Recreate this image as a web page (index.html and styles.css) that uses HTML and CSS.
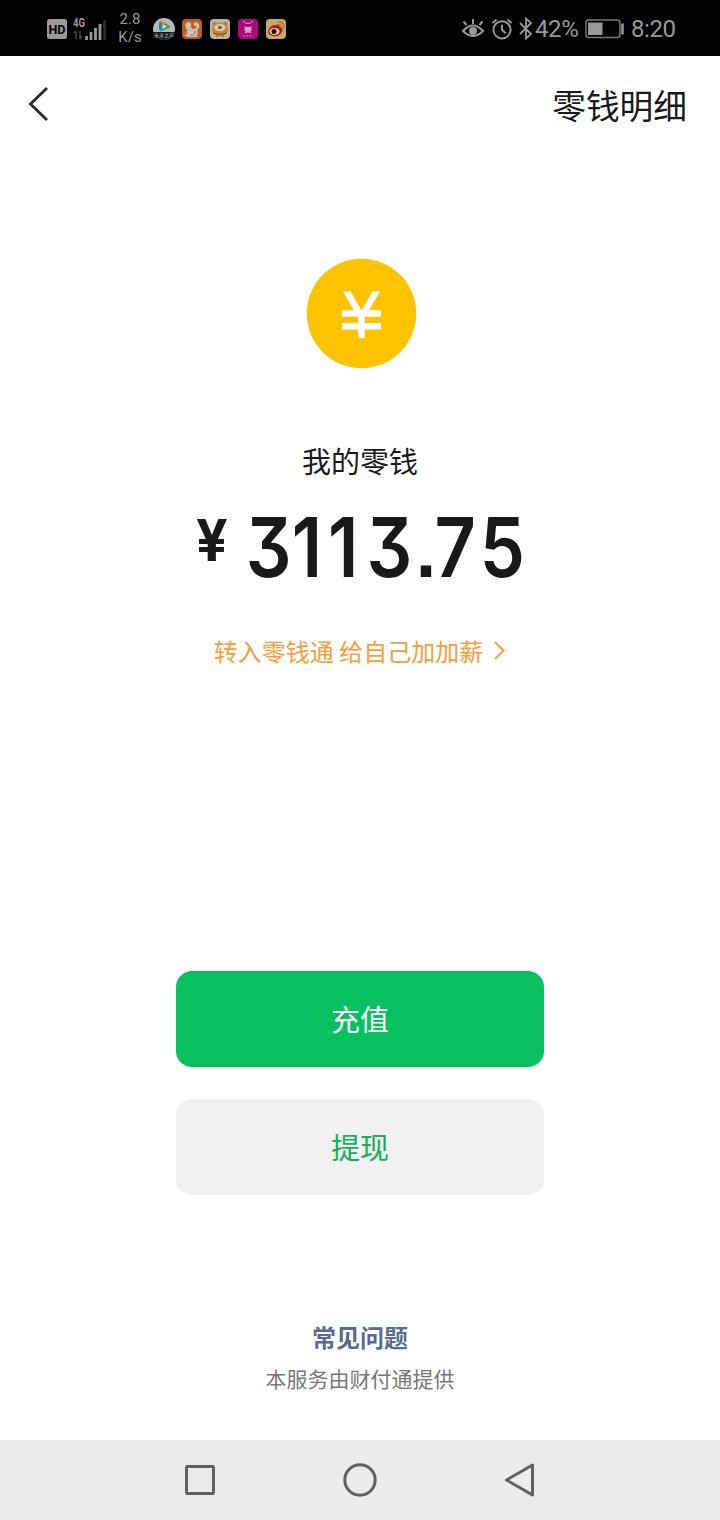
FILE: index.html
```html
<!DOCTYPE html>
<html lang="zh-CN">
<head>
<meta charset="utf-8">
<title>零钱</title>
<link rel="stylesheet" href="styles.css">
</head>
<body>
<div class="screen">
  <header class="status">
    <svg class="hd" width="20" height="20" viewBox="0 0 20 20"><rect width="20" height="20" rx="2.500" fill="#999"/><text x="10" y="15" text-anchor="middle" textLength="17" lengthAdjust="spacingAndGlyphs" class="hd-text">HD</text></svg>
    <svg class="signal" width="34" height="26" viewBox="0 0 34 26">
      <text x="0" y="10.500" textLength="12" lengthAdjust="spacingAndGlyphs" class="net">4G</text>
      <path d="M3 15v8M1 17l2-2M7 15v8M7 23l2-3" stroke="#444" stroke-width="1.500" fill="none"/>
      <path d="M13.500 24v-4M18 24v-8M22.500 24v-12M27 24v-16" stroke="#999" stroke-width="2.800"/>
      <path d="M31.500 24v-20" stroke="#303030" stroke-width="2.400"/>
    </svg>
    <div class="speed"><span>2.8</span><span>K/s</span></div>
    <div class="apps">
      <svg width="22" height="22" viewBox="0 0 22 22"><circle cx="11" cy="11" r="11" fill="#b5b9bb"/><path d="M6.500 3Q5 8 6.500 13L10 11V5z" fill="#2687a9"/><path d="M8 3l9 5q1 1-1 2L6.500 14l4-4z" fill="#43a047"/><path d="M6.500 3q1-1 3 0l4 2.500-4 1z" fill="#d9942d"/><path d="M9.500 6l4.500 2.500-4.500 2.500z" fill="#ddd"/><path d="M0 14h22q-4 8-11 8T0 14" fill="#101820"/><text x="11" y="18.500" text-anchor="middle" class="tiny">未来之声</text></svg>
      <svg width="22" height="22" viewBox="0 0 22 22"><rect x="1" y="1" width="20" height="20" rx="4" fill="#bd5b20"/><path d="M4 8q0-3 3-4 4 0 3 4 0 3 3 3 4-1 2-3-3 0-2-3 3-2 5 1 1 4-2 6 2 4-1 6l3 1H8q-3 0-5-2 3 0 4-3l-3 1 3-3q-3-1-2-3z" fill="#c9c2bc"/><path d="M9 17q5 1 5-4" stroke="#bd5b20" fill="none"/></svg>
      <svg width="22" height="22" viewBox="0 0 22 22"><rect x="1" y="1" width="20" height="20" rx="4" fill="#b9b3aa"/><circle cx="5.500" cy="6" r="2" fill="#b87820"/><circle cx="16.500" cy="6" r="2" fill="#b87820"/><ellipse cx="11" cy="11.500" rx="8" ry="7" fill="#c98925"/><ellipse cx="11" cy="9.500" rx="5.500" ry="3.800" fill="#d2c8b3"/><path d="M9.500 7.500l4 2-4 2z" fill="#684028"/><path d="M4 15q7 3 14 0M7 18h2m4 0h2" stroke="#77501d" fill="none"/></svg>
      <svg width="22" height="22" viewBox="0 0 22 22"><rect x="1" y="1" width="20" height="20" rx="4" fill="#ae087e"/><path d="M6 3q5 5 10 0" stroke="#d0a7c4" fill="none"/><path d="M7 8l2 1h4l2-1-1 3 1 1-2 2 2 1h-3l-1-1-1 1H7l2-1-2-2 1-1z" fill="#d0a7c4"/><path d="M6 18h10" stroke="#c58bb4" stroke-dasharray="2 1"/></svg>
      <svg width="22" height="22" viewBox="0 0 22 22"><rect x="1" y="1" width="20" height="20" rx="4" fill="#c4aa65"/><path d="M3 13q3-7 8-6 3-1 4 2 4 1 2 5-3 5-9 4-5-1-5-5" fill="#ae1e20"/><ellipse cx="9.500" cy="13.500" rx="5" ry="3.500" fill="#ddd2bd"/><circle cx="9" cy="13.500" r="2.500" fill="#17120f"/><path d="M13 7q3-1 3 3M13 4q6-1 6 6" stroke="#b97524" stroke-width="1.500" fill="none"/></svg>
    </div>
    <div class="right">
      <svg width="24" height="24" viewBox="0 0 24 24" fill="none" stroke="#999" stroke-width="2"><path d="M2 14Q12 3 22 14 12 24 2 14z"/><circle cx="12" cy="14" r="4" fill="#999" stroke="none"/><path d="M12 7V2M5.500 8L2.500 4.500M18.500 8l3-3.500"/></svg>
      <svg class="alarm" width="22" height="24" viewBox="0 0 22 24" fill="none" stroke="#999" stroke-width="2"><circle cx="11" cy="12.800" r="8.600"/><path d="M11 7.800v5l3.500 3.500M1.500 6l4-3.500M20.500 6l-4-3.500"/></svg>
      <svg class="bt" width="14" height="24" viewBox="0 0 14 24" fill="none" stroke="#999" stroke-width="1.800"><path d="M1 6l11 11-5 4.500V1.500L12 6 1 17"/></svg>
      <span class="percent">42%</span>
      <svg class="battery" width="40" height="20" viewBox="0 0 40 20"><rect x=".9" y="1" width="34" height="17.500" rx="2.500" fill="none" stroke="#777" stroke-width="1.500"/><rect x="3" y="3.500" width="14.500" height="12.500" fill="#999"/><path d="M37.500 4.500v11" stroke="#999" stroke-width="2.500"/></svg>
      <span class="clock">8:20</span>
    </div>
  </header>

  <nav class="topbar">
    <svg width="22" height="36" viewBox="0 0 22 36" fill="none" stroke="#2a2a2a" stroke-width="2.800"><path d="M19 2L2.500 18 19 34"/></svg>
    <span class="detail">零钱明细</span>
  </nav>

  <main class="wallet">
    <svg class="coin" width="110" height="110" viewBox="0 0 110 110">
      <clipPath id="arms"><rect x="30" y="32.500" width="50" height="50"/></clipPath>
      <circle cx="54.500" cy="54.500" r="54.700" fill="#ffc300"/>
      <path clip-path="url(#arms)" d="M35.500 25L54.500 58 73.500 25M35 54.500h39M35 67.300h39M54.500 54v25.300" fill="none" stroke="#fff" stroke-width="6.500"/>
    </svg>
    <h1 class="label">我的零钱</h1>
    <svg class="amount" width="340" height="80" viewBox="0 0 340 80">
      <text class="yen" transform="translate(6 53.500) scale(.96 1)">¥</text>
      <text class="digits" transform="translate(0 70) scale(.87 1)" x="64 117 158.500 203 258 281 333" y="0">3113.75</text>
    </svg>
    <a class="promo"><span>转入零钱通 给自己加加薪</span><svg width="12" height="20" viewBox="0 0 12 20" fill="none" stroke="#fa9d3b" stroke-width="2"><path d="M1 1L9.500 9.500 1 18"/></svg></a>
    <div class="actions">
      <button class="btn primary">充值</button>
      <button class="btn secondary">提现</button>
    </div>
    <footer class="foot">
      <a class="faq">常见问题</a>
      <p class="provider">本服务由财付通提供</p>
    </footer>
  </main>

  <div class="navbar">
    <svg width="36" height="36" viewBox="0 0 36 36"><rect x="4.500" y="4.500" width="27" height="27" rx="1"/></svg>
    <svg width="36" height="36" viewBox="0 0 36 36"><circle cx="18" cy="18" r="15.200"/></svg>
    <svg width="36" height="36" viewBox="0 0 36 36"><path d="M4.500 18L30.500 3v30z" stroke-linejoin="round"/></svg>
  </div>
</div>
</body>
</html>
```
FILE: styles.css
```css
* { box-sizing: border-box; }
body { margin: 0; background: #fff; font-family: "Noto Sans CJK SC", sans-serif; color: #191919; }
svg { display: block; flex: none; }
.screen { width: 720px; height: 1520px; display: flex; flex-direction: column; overflow: hidden; }

.status { height: 56px; flex: none; background: #000; color: #999; display: flex; align-items: center; padding: 2px 0 0 47px; font-family: Roboto, sans-serif; }
.hd-text { font: 700 13.5px Roboto, sans-serif; fill: #000; }
.signal { margin-left: 6px; }
.net { font: 700 12px Roboto, sans-serif; fill: #999; }
.speed { width: 32px; margin-left: 7px; display: flex; flex-direction: column; text-align: center; font-size: 15px; line-height: 18px; margin-top: -2px; }
.apps { display: flex; gap: 6px; margin-left: 7px; }
.tiny { font: 5px "Noto Sans CJK SC", sans-serif; fill: #bbb; }
.right { margin-left: auto; width: 259px; display: flex; align-items: center; }
.alarm { margin-left: 6px; }
.bt { margin-left: 6px; }
.percent { width: 48px; margin-left: 2px; font-size: 24px; letter-spacing: -.4px; }
.battery { margin-left: 2px; }
.clock { margin-left: 6px; font-size: 24px; letter-spacing: -.4px; }

.topbar { height: 96px; flex: none; display: flex; justify-content: space-between; align-items: center; padding: 0 33px 0 28px; font-size: 33.7px; line-height: 50px; }
.detail { padding-top: 2px; }

.wallet { flex: 1; display: flex; flex-direction: column; align-items: center; }
.coin { margin: 107px 0 0 3px; overflow: visible; }
.label { margin: 70px 0 0; font-size: 29px; line-height: 42px; font-weight: 400; }
.amount { margin-top: 26px; fill: #191919; overflow: visible; }
.yen { font: 700 58px Inter, sans-serif; }
.digits { font: 600 82.5px Inter, sans-serif; font-feature-settings: "cv09" 1, "ss07" 1; }
.promo { margin-top: 46px; display: flex; align-items: center; gap: 11px; font-size: 24px; line-height: 36px; color: #fa9d3b; }
.actions { margin-top: 302px; display: flex; flex-direction: column; gap: 32px; }
.btn { width: 368px; height: 96px; padding: 0 0 2px; border: 0; border-radius: 16px; font: 29px/42px "Noto Sans CJK SC", sans-serif; }
.primary { background: #07c160; color: #fff; }
.secondary { background: #f1f1f1; color: #14ae5c; }
.foot { margin-top: 124px; text-align: center; }
.faq { display: block; font-size: 24px; line-height: 36px; font-weight: 700; color: #576b95; }
.provider { margin: 8px 0 0; font-size: 21px; line-height: 30px; color: #777; }

.navbar { height: 80px; flex: none; background: #ececec; display: flex; justify-content: center; align-items: center; gap: 124px; }
.navbar svg { fill: none; stroke: #606060; stroke-width: 3; }
```
